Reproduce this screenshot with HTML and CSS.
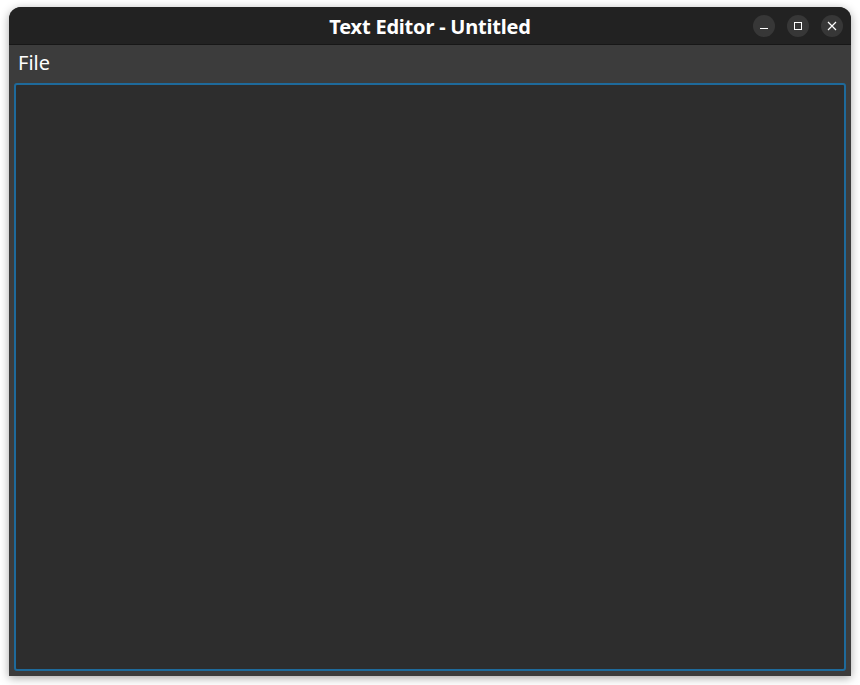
FILE: index.html
```html
<!DOCTYPE html>
<html>
<head>
<meta charset="utf-8">
<link rel="stylesheet" href="styles.css">
</head>
<body>
<div class="window">
  <div class="titlebar">
    <div class="title">Text Editor - Untitled</div>
    <div class="controls">
      <div class="btn"><svg width="10" height="10" viewBox="0 0 10 10"><path d="M1 7.5H9" stroke="#fff" stroke-width="1"/></svg></div>
      <div class="btn"><svg width="10" height="10" viewBox="0 0 10 10"><rect x="1.5" y="1.5" width="7" height="7" fill="none" stroke="#fff" stroke-width="1"/></svg></div>
      <div class="btn"><svg width="10" height="10" viewBox="0 0 10 10"><path d="M1 1L9 9M9 1L1 9" stroke="#fff" stroke-width="1.2"/></svg></div>
    </div>
  </div>
  <div class="menubar"><span class="menu-item">File</span></div>
  <div class="editor-wrap"><div class="editor"></div></div>
</div>
</body>
</html>
```
FILE: styles.css
```css
html, body { margin: 0; padding: 0; }
body {
  background: #ffffff;
  width: 860px;
  height: 685px;
  overflow: hidden;
  font-family: "Noto Sans", "Open Sans", sans-serif;
}
.window {
  margin: 7px 0 0 9px;
  width: 842px;
  height: 669px;
  border-radius: 12px 12px 0 0;
  background: #3c3c3c;
  box-shadow: 0 2px 10px rgba(0,0,0,0.35);
  display: flex;
  flex-direction: column;
  overflow: hidden;
}
.titlebar {
  height: 37px;
  background: #222222;
  border-bottom: 1px solid #171717;
  position: relative;
  display: flex;
  align-items: center;
  justify-content: center;
  flex-shrink: 0;
}
.title {
  color: #ffffff;
  font-weight: 700;
  font-size: 20px;
  line-height: 24px;
  letter-spacing: -0.2px;
  margin-top: 3px;
}
.controls {
  position: absolute;
  right: 8px;
  top: 8px;
  display: flex;
  gap: 12px;
}
.btn {
  width: 22px;
  height: 22px;
  border-radius: 50%;
  background: #373737;
  display: flex;
  align-items: center;
  justify-content: center;
}
.btn svg { display: block; }
.menubar {
  height: 38px;
  display: flex;
  align-items: center;
  padding-left: 9px;
  flex-shrink: 0;
}
.menu-item {
  color: #ffffff;
  font-size: 20px;
  line-height: 24px;
  margin-top: -3px;
}
.editor-wrap {
  flex: 1;
  padding: 0 5px 5px 5px;
  display: flex;
}
.editor {
  flex: 1;
  background: #2d2d2d;
  border: 2px solid #1e6a9b;
  border-radius: 3px;
}
```
